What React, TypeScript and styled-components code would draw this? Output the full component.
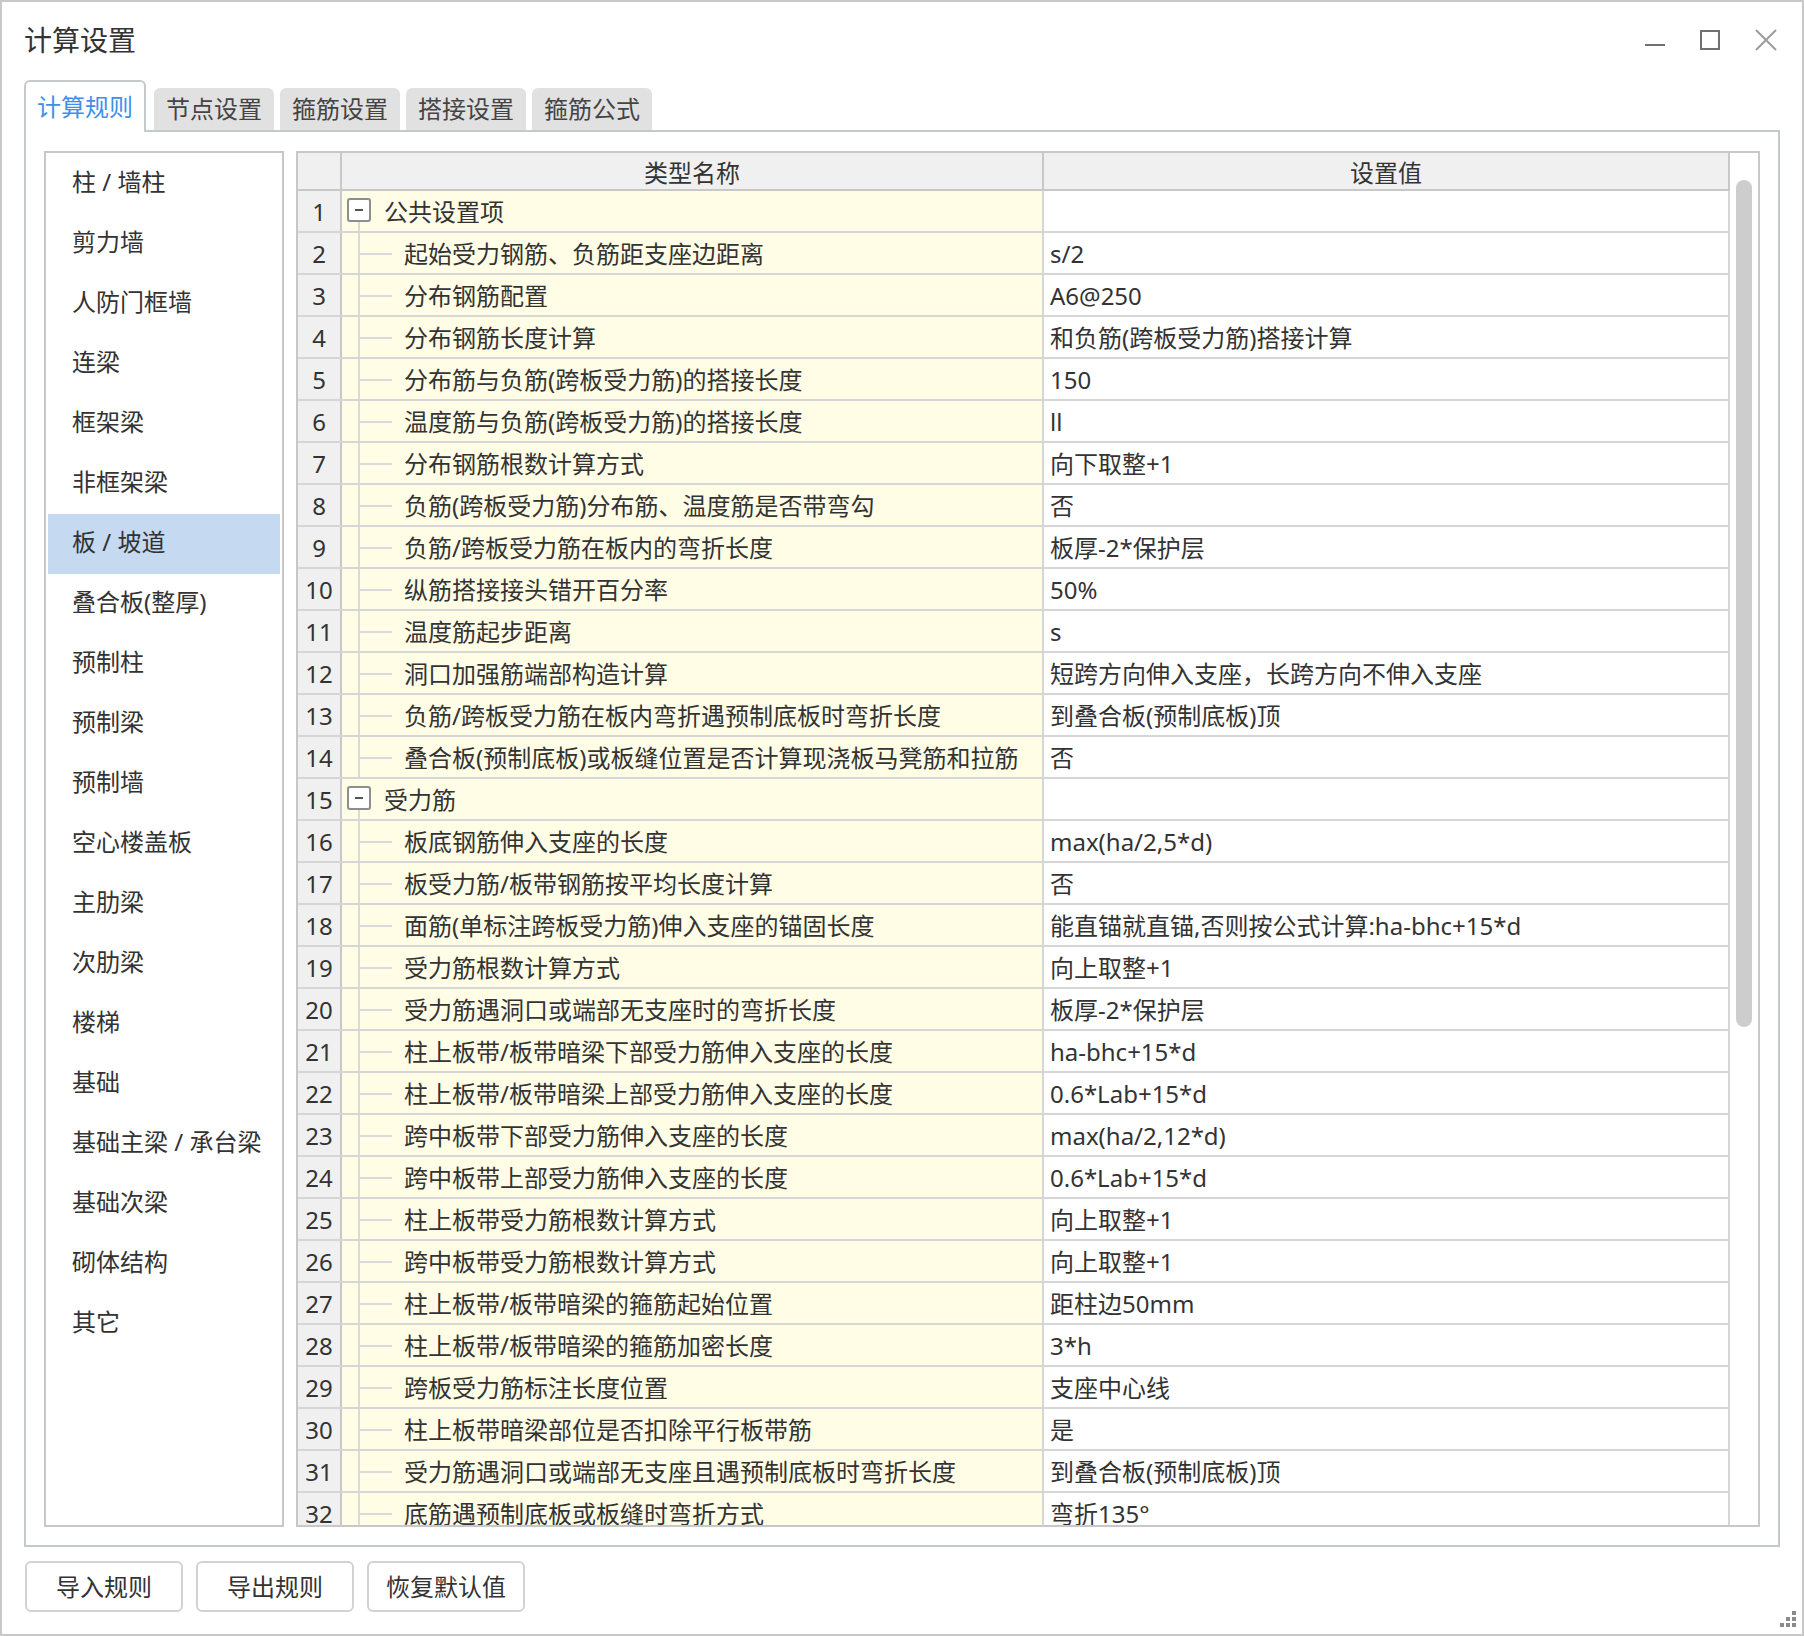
import React from 'react';
import styled, { createGlobalStyle } from 'styled-components';

const GlobalStyle = createGlobalStyle`
  html, body { margin: 0; padding: 0; background: #fff; }
  body { font-family: "Noto Sans", "Noto Sans CJK SC", sans-serif; color: #333; }
  * { box-sizing: border-box; }
`;

const Window = styled.div`
  width: 1804px;
  height: 1636px;
  border: 2px solid #c8c8c8;
  background: #fff;
  display: flex;
  flex-direction: column;
  overflow: hidden;
`;

const TitleBar = styled.div`
  height: 76px;
  display: flex;
  align-items: center;
  padding-left: 22px;
  padding-right: 25px;
`;

const Title = styled.div`
  font-size: 28px;
  color: #333;
  flex: 1;
  line-height: 1;
`;

const Controls = styled.div`
  display: flex;
  align-items: center;
  gap: 35px;
`;

const CtrlBtn = styled.div<{ $w: number }>`
  width: ${(p) => p.$w}px;
  height: 22px;
  display: flex;
  align-items: center;
  justify-content: center;
`;

const TabsRow = styled.div`
  margin-top: 2px;
  height: 50px;
  display: flex;
  align-items: flex-end;
  padding-left: 22px;
  gap: 6px;
`;

const Tab = styled.div<{ $active?: boolean }>`
  width: ${(p) => (p.$active ? 122 : 120)}px;
  height: ${(p) => (p.$active ? 52 : 42)}px;
  margin-bottom: ${(p) => (p.$active ? -2 : 0)}px;
  margin-right: ${(p) => (p.$active ? 2 : 0)}px;
  background: ${(p) => (p.$active ? '#fff' : '#e1e1e1')};
  border: ${(p) => (p.$active ? '2px solid #c6c9cc' : 'none')};
  border-bottom: none;
  border-radius: 6px 6px 0 0;
  color: ${(p) => (p.$active ? '#3f8fea' : '#444')};
  font-size: 24px;
  display: flex;
  align-items: center;
  justify-content: center;
  position: relative;
  z-index: 1;
  line-height: 1;
`;

const Panel = styled.div`
  margin-left: 22px;
  width: 1756px;
  height: 1417px;
  border: 2px solid #c6c9cc;
  padding: 19px 18px 18px 18px;
  display: flex;
  gap: 12px;
`;

const List = styled.div`
  width: 240px;
  height: 100%;
  border: 2px solid #c8c8c8;
  padding: 1px 2px;
  display: flex;
  flex-direction: column;
`;

const ListItem = styled.div<{ $selected?: boolean }>`
  height: 60px;
  flex-shrink: 0;
  display: flex;
  align-items: center;
  padding-left: 24px;
  padding-bottom: 4px;
  font-size: 24px;
  color: #333;
  line-height: 1;
  white-space: nowrap;
  background: ${(p) => (p.$selected ? '#c5daf0' : 'transparent')};
`;

const Grid = styled.div`
  flex: 1;
  height: 100%;
  border: 2px solid #c8c8c8;
  display: flex;
  overflow: hidden;
`;

const TableArea = styled.div`
  width: 1432px;
  height: 100%;
  overflow: hidden;
  display: flex;
  flex-direction: column;
`;

const HeaderRow = styled.div`
  display: grid;
  grid-template-columns: 44px 702px 686px;
  height: 38px;
  flex-shrink: 0;
  background: #f0f0f0;
  border-bottom: 2px solid #c8c8c8;
`;

const HeaderCell = styled.div`
  border-right: 2px solid #c8c8c8;
  display: flex;
  align-items: center;
  justify-content: center;
  padding-top: 3px;
  font-size: 24px;
  color: #333;
  line-height: 1;
`;

const Row = styled.div`
  display: grid;
  grid-template-columns: 44px 702px 686px;
  height: 42px;
  flex-shrink: 0;
  border-bottom: 2px solid #d6d6d6;
`;

const NumCell = styled.div`
  background: #f0f0f0;
  border-right: 2px solid #c8c8c8;
  display: flex;
  align-items: center;
  justify-content: center;
  padding-top: 2px;
  font-size: 24px;
  color: #333;
  line-height: 1;
`;

const TreeCell = styled.div`
  background: #fffde6;
  border-right: 2px solid #d6d6d6;
  display: flex;
  align-items: center;
  font-size: 24px;
  color: #333;
  white-space: nowrap;
  overflow: hidden;
  line-height: 1;
`;

const TreeText = styled.span`
  padding-top: 2px;
`;

const ValueCell = styled.div`
  background: #fff;
  border-right: 2px solid #d6d6d6;
  display: flex;
  align-items: center;
  padding-left: 6px;
  padding-top: 2px;
  font-size: 24px;
  color: #333;
  white-space: nowrap;
  overflow: hidden;
  line-height: 1;
`;

const Gutter = styled.svg`
  flex-shrink: 0;
  display: block;
`;

const ScrollCol = styled.div`
  width: 28px;
  height: 100%;
  background: #fff;
  padding-top: 27px;
  padding-left: 6px;
`;

const Thumb = styled.div`
  width: 16px;
  height: 847px;
  border-radius: 8px;
  background: #cdcdcd;
`;

const Footer = styled.div`
  flex: 1;
  display: flex;
  padding-left: 23px;
  padding-top: 14px;
  padding-right: 6px;
  padding-bottom: 7px;
  gap: 13px;
`;

const Button = styled.div`
  width: 158px;
  height: 51px;
  border: 2px solid #d2d2d2;
  border-radius: 6px;
  background: #fff;
  display: flex;
  align-items: center;
  justify-content: center;
  font-size: 24px;
  color: #333;
  line-height: 1;
`;

const Grip = styled.svg`
  margin-left: auto;
  align-self: flex-end;
  display: block;
`;

type RowData = { name: string; value: string; group?: boolean; last?: boolean };

const rows: RowData[] = [
  { name: '公共设置项', value: '', group: true },
  { name: '起始受力钢筋、负筋距支座边距离', value: 's/2' },
  { name: '分布钢筋配置', value: 'A6@250' },
  { name: '分布钢筋长度计算', value: '和负筋(跨板受力筋)搭接计算' },
  { name: '分布筋与负筋(跨板受力筋)的搭接长度', value: '150' },
  { name: '温度筋与负筋(跨板受力筋)的搭接长度', value: 'll' },
  { name: '分布钢筋根数计算方式', value: '向下取整+1' },
  { name: '负筋(跨板受力筋)分布筋、温度筋是否带弯勾', value: '否' },
  { name: '负筋/跨板受力筋在板内的弯折长度', value: '板厚-2*保护层' },
  { name: '纵筋搭接接头错开百分率', value: '50%' },
  { name: '温度筋起步距离', value: 's' },
  { name: '洞口加强筋端部构造计算', value: '短跨方向伸入支座，长跨方向不伸入支座' },
  { name: '负筋/跨板受力筋在板内弯折遇预制底板时弯折长度', value: '到叠合板(预制底板)顶' },
  { name: '叠合板(预制底板)或板缝位置是否计算现浇板马凳筋和拉筋', value: '否' },
  { name: '受力筋', value: '', group: true },
  { name: '板底钢筋伸入支座的长度', value: 'max(ha/2,5*d)' },
  { name: '板受力筋/板带钢筋按平均长度计算', value: '否' },
  { name: '面筋(单标注跨板受力筋)伸入支座的锚固长度', value: '能直锚就直锚,否则按公式计算:ha-bhc+15*d' },
  { name: '受力筋根数计算方式', value: '向上取整+1' },
  { name: '受力筋遇洞口或端部无支座时的弯折长度', value: '板厚-2*保护层' },
  { name: '柱上板带/板带暗梁下部受力筋伸入支座的长度', value: 'ha-bhc+15*d' },
  { name: '柱上板带/板带暗梁上部受力筋伸入支座的长度', value: '0.6*Lab+15*d' },
  { name: '跨中板带下部受力筋伸入支座的长度', value: 'max(ha/2,12*d)' },
  { name: '跨中板带上部受力筋伸入支座的长度', value: '0.6*Lab+15*d' },
  { name: '柱上板带受力筋根数计算方式', value: '向上取整+1' },
  { name: '跨中板带受力筋根数计算方式', value: '向上取整+1' },
  { name: '柱上板带/板带暗梁的箍筋起始位置', value: '距柱边50mm' },
  { name: '柱上板带/板带暗梁的箍筋加密长度', value: '3*h' },
  { name: '跨板受力筋标注长度位置', value: '支座中心线' },
  { name: '柱上板带暗梁部位是否扣除平行板带筋', value: '是' },
  { name: '受力筋遇洞口或端部无支座且遇预制底板时弯折长度', value: '到叠合板(预制底板)顶' },
  { name: '底筋遇预制底板或板缝时弯折方式', value: '弯折135°' },
];

const listItems = [
  '柱 / 墙柱', '剪力墙', '人防门框墙', '连梁', '框架梁', '非框架梁', '板 / 坡道',
  '叠合板(整厚)', '预制柱', '预制梁', '预制墙', '空心楼盖板', '主肋梁', '次肋梁',
  '楼梯', '基础', '基础主梁 / 承台梁', '基础次梁', '砌体结构', '其它',
];

const tabs = ['计算规则', '节点设置', '箍筋设置', '搭接设置', '箍筋公式'];

const GroupGutter = () => (
  <Gutter width={42} height={40} viewBox="0 0 42 40">
    <rect x={6} y={8} width={22} height={22} rx={2} fill="#fff" stroke="#8e8e8e" strokeWidth={2} />
    <rect x={13} y={18} width={8} height={2} fill="#555" />
    <rect x={16} y={31} width={2} height={9} fill="#dadada" />
  </Gutter>
);

const ChildGutter = ({ last }: { last?: boolean }) => (
  <Gutter width={62} height={40} viewBox="0 0 62 40">
    <rect x={16} y={0} width={2} height={last ? 21 : 40} fill="#dadada" />
    <rect x={18} y={20} width={32} height={2} fill="#dadada" />
  </Gutter>
);

export default function App() {
  return (
    <>
      <GlobalStyle />
      <Window>
        <TitleBar>
          <Title>计算设置</Title>
          <Controls>
            <CtrlBtn $w={20}>
              <svg width={20} height={22} viewBox="0 0 20 22">
                <rect x={0} y={15} width={20} height={2} fill="#707070" />
              </svg>
            </CtrlBtn>
            <CtrlBtn $w={20}>
              <svg width={20} height={20} viewBox="0 0 20 20">
                <rect x={1} y={1} width={18} height={18} fill="none" stroke="#707070" strokeWidth={2} />
              </svg>
            </CtrlBtn>
            <CtrlBtn $w={22}>
              <svg width={22} height={22} viewBox="0 0 22 22">
                <path d="M1 1 L21 21 M21 1 L1 21" stroke="#9c9c9c" strokeWidth={2} fill="none" />
              </svg>
            </CtrlBtn>
          </Controls>
        </TitleBar>
        <TabsRow>
          {tabs.map((t, i) => (
            <Tab key={t} $active={i === 0}>{t}</Tab>
          ))}
        </TabsRow>
        <Panel>
          <List>
            {listItems.map((it) => (
              <ListItem key={it} $selected={it === '板 / 坡道'}>{it}</ListItem>
            ))}
          </List>
          <Grid>
            <TableArea>
              <HeaderRow>
                <HeaderCell />
                <HeaderCell>类型名称</HeaderCell>
                <HeaderCell>设置值</HeaderCell>
              </HeaderRow>
              {rows.map((r, i) => (
                <Row key={i}>
                  <NumCell>{i + 1}</NumCell>
                  <TreeCell>
                    {r.group ? <GroupGutter /> : <ChildGutter last={r.last} />}
                    <TreeText>{r.name}</TreeText>
                  </TreeCell>
                  <ValueCell>{r.value}</ValueCell>
                </Row>
              ))}
            </TableArea>
            <ScrollCol>
              <Thumb />
            </ScrollCol>
          </Grid>
        </Panel>
        <Footer>
          <Button>导入规则</Button>
          <Button>导出规则</Button>
          <Button>恢复默认值</Button>
          <Grip width={16} height={16} viewBox="0 0 16 16">
            <rect x={12} y={0} width={4} height={4} fill="#8a8a8a" />
            <rect x={6} y={6} width={4} height={4} fill="#8a8a8a" />
            <rect x={12} y={6} width={4} height={4} fill="#8a8a8a" />
            <rect x={0} y={12} width={4} height={4} fill="#8a8a8a" />
            <rect x={6} y={12} width={4} height={4} fill="#8a8a8a" />
            <rect x={12} y={12} width={4} height={4} fill="#8a8a8a" />
          </Grip>
        </Footer>
      </Window>
    </>
  );
}
